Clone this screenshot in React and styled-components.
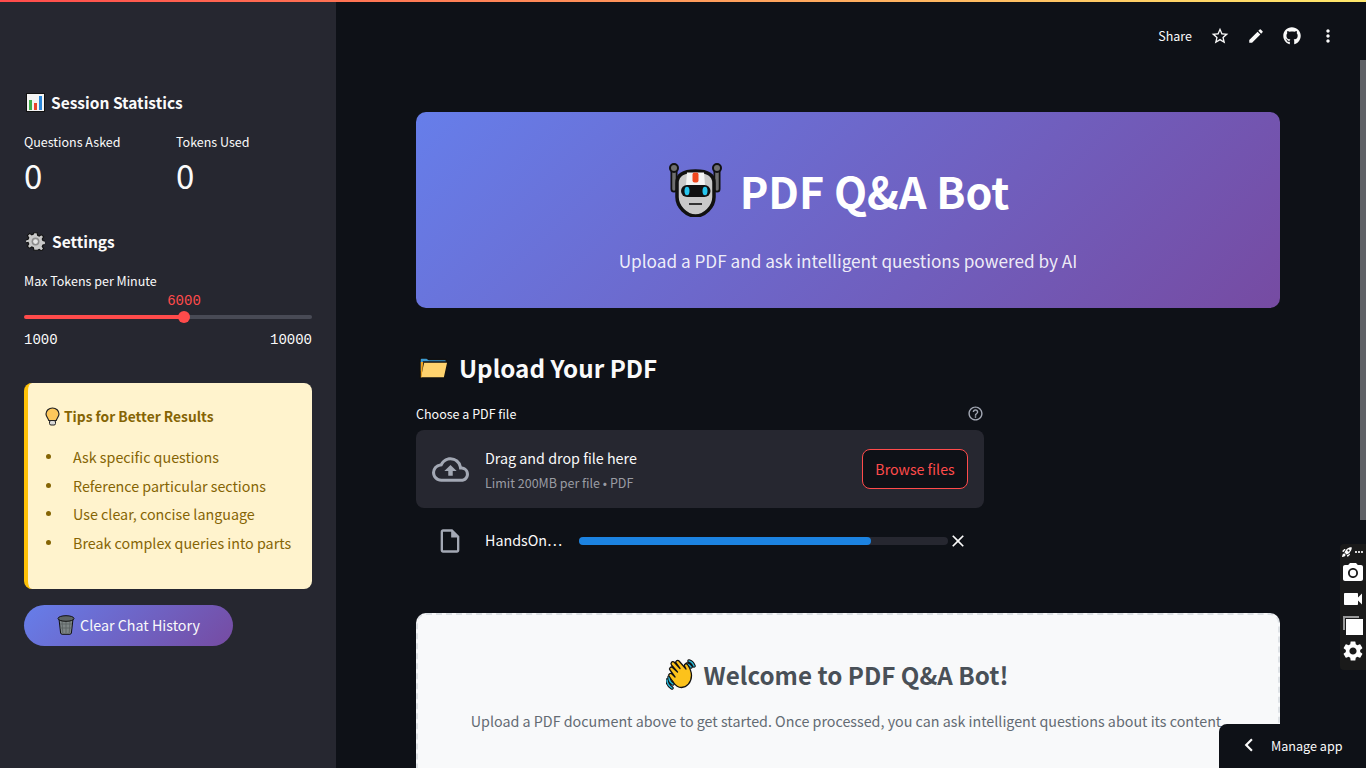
import styled, { createGlobalStyle } from 'styled-components';
import {
    MdStarBorder, MdEdit, MdMoreVert, MdOutlineCloudUpload, MdOutlineInsertDriveFile, MdClose,
    MdHelpOutline, MdChevronLeft, MdPhotoCamera, MdVideocam, MdSettings, MdMoreHoriz, MdRocketLaunch,
} from 'react-icons/md';
import { FaGithub } from 'react-icons/fa';

const GlobalStyle = createGlobalStyle`
    html, body {
        margin: 0;
        height: 100%;
        overflow: hidden;
        background: #0e1117;
    }
    * { box-sizing: border-box; }
    body {
        font-family: "Noto Sans CJK JP", "Noto Sans", sans-serif;
        color: #fafafa;
    }
`;

const Page = styled.div`
    position: relative;
    display: flex;
    flex-direction: column;
    width: 1366px;
    height: 768px;
    overflow: hidden;
`;

const Decoration = styled.div`
    flex: none;
    height: 2px;
    background: linear-gradient(90deg, #ff4b4b, #ffe96b);
`;

const Body = styled.div`
    display: flex;
    flex: 1;
    min-height: 0;
`;

const Sidebar = styled.aside`
    flex: none;
    width: 336px;
    padding: 87px 24px 0;
    background: #262730;
`;

const SideHeading = styled.h3`
    display: flex;
    align-items: center;
    gap: ${(p) => p.$gap || 6}px;
    margin: 0;
    padding-left: 2px;
    height: 26px;
    font-size: 15.5px;
    line-height: 26px;
    font-weight: 600;
`;

const Metrics = styled.div`
    display: grid;
    grid-template-columns: 152px 1fr;
    margin-top: 16px;
    margin-bottom: 31px;
`;

const MetricLabel = styled.div`
    font-size: 12.5px;
    line-height: 22px;
`;

const MetricValue = styled.div`
    font-size: 33px;
    line-height: 44px;
    font-weight: 400;
`;

const FieldLabel = styled.div`
    font-size: 12.5px;
    line-height: 20px;
    margin-top: ${(p) => p.$top || 0}px;
`;

const Slider = styled.div`
    margin-top: 1px;
    font-family: "Liberation Mono", monospace;
    font-size: 14px;
`;

const SliderValue = styled.div`
    text-align: center;
    width: 320px;
    line-height: 18px;
    color: #ff4b4b;
`;

const Track = styled.div`
    position: relative;
    height: 4px;
    margin-top: 5px;
    border-radius: 2px;
    background: linear-gradient(90deg, #ff4b4b 0 160px, #484a55 160px);
`;

const Thumb = styled.span`
    position: absolute;
    left: 154px;
    top: -4px;
    width: 12px;
    height: 12px;
    border-radius: 50%;
    background: #ff4b4b;
`;

const SliderEnds = styled.div`
    display: flex;
    justify-content: space-between;
    margin-top: 12px;
    line-height: 18px;
    color: #fafafa;
`;

const TipsBox = styled.div`
    margin-top: 34px;
    height: 206px;
    padding: 21px 20px 0 18px;
    border-left: 4px solid #ffc107;
    border-radius: 8px;
    background: #fff3cd;
    color: #856404;
`;

const TipsTitle = styled.div`
    display: flex;
    align-items: center;
    gap: 4px;
    height: 24px;
    margin-left: -1px;
    font-size: 13.8px;
    font-weight: 600;
    line-height: 24px;
`;

const TipsList = styled.ul`
    margin: 14px 0 0;
    padding: 0;
    list-style: none;
`;

const TipsItem = styled.li`
    display: flex;
    align-items: center;
    height: 28.8px;
    font-size: 14.3px;
    white-space: nowrap;

    &::before {
        content: '';
        flex: none;
        width: 5px;
        height: 5px;
        margin-right: 22px;
        border-radius: 50%;
        background: #856404;
    }
`;

const ClearButton = styled.button`
    display: flex;
    align-items: center;
    justify-content: center;
    gap: 5px;
    width: 209px;
    height: 41px;
    margin-top: 16px;
    padding: 0 0 2px;
    border: 0;
    border-radius: 21px;
    background: linear-gradient(135deg, #667eea, #764ba2);
    color: #fafafa;
    font-family: inherit;
    font-size: 14.3px;
`;

const Main = styled.main`
    position: relative;
    flex: 1;
    min-width: 0;
    overflow: hidden;
`;

const Header = styled.header`
    display: flex;
    align-items: center;
    justify-content: flex-end;
    height: 68px;
    padding-right: 20px;
`;

const ShareLabel = styled.span`
    margin-right: 10px;
    font-size: 12.5px;
    line-height: 20px;
`;

const HeaderIcon = styled.span`
    display: flex;
    align-items: center;
    justify-content: center;
    width: 36px;
    height: 36px;
    font-size: ${(p) => p.$size || 20}px;
`;

const Content = styled.div`
    padding: 42px 86px 0 80px;
`;

const Hero = styled.section`
    display: flex;
    flex-direction: column;
    align-items: center;
    height: 196px;
    padding-top: 48px;
    border-radius: 10px;
    background: linear-gradient(135deg, #667eea 0%, #764ba2 100%);
`;

const HeroTitle = styled.h1`
    display: flex;
    align-items: center;
    gap: 17px;
    margin: 0 18px 0 0;
    height: 60px;
    font-size: 43px;
    line-height: 60px;
    font-weight: 700;
    color: #fff;
`;

const HeroText = styled.p`
    margin: 27px 0 0;
    font-size: 17.2px;
    line-height: 28px;
    color: rgba(255, 255, 255, 0.9);
`;

const SectionTitle = styled.h2`
    display: flex;
    align-items: center;
    gap: 10px;
    margin: 41px 0 0;
    padding-left: 3px;
    height: 38px;
    font-size: 24.2px;
    line-height: 38px;
    font-weight: 600;
`;

const Uploader = styled.div`
    width: 568px;
    margin-top: 16px;
`;

const UploaderHead = styled.div`
    display: flex;
    align-items: center;
    justify-content: space-between;
    height: 20px;
    margin-bottom: 7px;
    font-size: 12.5px;
`;

const HelpIcon = styled(MdHelpOutline)`
    font-size: 17px;
    color: #a3a8b4;
`;

const DropZone = styled.div`
    display: flex;
    align-items: center;
    height: 78px;
    padding: 0 16px;
    border-radius: 8px;
    background: #262730;
`;

const CloudIcon = styled(MdOutlineCloudUpload)`
    flex: none;
    font-size: 37px;
    color: #a3a8b4;
`;

const DropText = styled.div`
    flex: 1;
    margin-left: 16px;
`;

const DropTitle = styled.div`
    font-size: 14.3px;
    line-height: 24px;
`;

const DropHint = styled.div`
    margin-top: 3px;
    font-size: 12.5px;
    line-height: 20px;
    color: #9a9ca3;
`;

const BrowseButton = styled.button`
    width: 106px;
    height: 40px;
    border: 1px solid #ff4b4b;
    border-radius: 8px;
    background: #0e1117;
    color: #ff4b4b;
    font-family: inherit;
    font-size: 14.2px;
`;

const FileRow = styled.div`
    display: flex;
    align-items: center;
    height: 32px;
    margin-top: 17px;
    padding-left: 20px;
`;

const FileIcon = styled(MdOutlineInsertDriveFile)`
    flex: none;
    font-size: 28px;
    color: #a3a8b4;
`;

const FileName = styled.span`
    width: 94px;
    margin-left: 21px;
    padding-bottom: 3px;
    font-size: 14.3px;
    white-space: nowrap;
`;

const Progress = styled.div`
    width: 369px;
    height: 8px;
    border-radius: 4px;
    background: #262730;
`;

const ProgressFill = styled.div`
    height: 100%;
    border-radius: 4px;
    background: #1c83e1;
`;

const CloseIcon = styled(MdClose)`
    flex: none;
    font-size: 20px;
`;

const WelcomeCard = styled.section`
    display: flex;
    flex-direction: column;
    align-items: center;
    height: 220px;
    margin-top: 56px;
    padding-top: 41px;
    border: 2px dashed #dee2e6;
    border-radius: 10px;
    background: #f8f9fa;
`;

const WelcomeTitle = styled.h2`
    display: flex;
    align-items: center;
    gap: 8px;
    margin: 0 22px 0 0;
    height: 38px;
    font-size: 24.2px;
    line-height: 38px;
    font-weight: 600;
    color: #495057;
`;

const WelcomeText = styled.p`
    margin: 15px 4px 0 0;
    font-size: 14.3px;
    line-height: 24px;
    white-space: nowrap;
    color: #636b73;
`;

const ScrollThumb = styled.div`
    position: absolute;
    top: 60px;
    right: 0;
    width: 6px;
    height: 460px;
    background: #5f6166;
`;

const RecorderBar = styled.div`
    position: absolute;
    top: 544px;
    right: 0;
    display: flex;
    flex-direction: column;
    align-items: center;
    width: 26px;
    height: 126px;
    padding-top: 3px;
    border-radius: 4px 0 0 4px;
    background: #1a1a1a;
    color: #fff;
    font-size: 24px;
`;

const RecorderTop = styled.div`
    display: flex;
    align-items: center;
    height: 10px;
    margin-bottom: 3px;
    font-size: 12px;
`;

const RecorderIcon = styled.span`
    display: flex;
    height: 26px;
    align-items: center;
`;

const ManageApp = styled.div`
    position: absolute;
    right: 0;
    bottom: 0;
    display: flex;
    align-items: center;
    width: 147px;
    height: 44px;
    padding: 0 0 2px 17px;
    border-top-left-radius: 8px;
    background: #0e1117;
    font-size: 12.6px;
`;

const ManageIcon = styled(MdChevronLeft)`
    flex: none;
    margin-right: 9px;
    font-size: 26px;
`;

/* emoji drawings */
const ChartEmoji = () => (
    <svg width="19" height="19" viewBox="0 0 19 19">
        <rect x="0.5" y="0.5" width="18" height="18" fill="#f4f4f4" stroke="#111" />
        <rect x="3" y="7" width="3" height="10" fill="#3fae49" />
        <rect x="8" y="10" width="3" height="7" fill="#e8452c" />
        <rect x="13" y="3" width="3" height="14" fill="#2a86d8" />
    </svg>
);

const GearEmoji = () => (
    <svg width="19" height="19" viewBox="0 0 24 24">
        <path d="M10 1h4l.7 3.2 2 .9 2.8-1.800 2.800 2.800-1.800 2.800.9 2 3.200.7v4l-3.200.7-.9 2 1.800 2.800-2.800 2.800-2.800-1.800-2 .9L14 23h-4l-.7-3.200-2-.9-2.800 1.800-2.800-2.800 1.800-2.800-.9-2L-.6 14v-4l3.200-.7.9-2L1.700 4.500l2.800-2.800 2.800 1.800 2-.9z" fill="#c9c9c9" stroke="#111" strokeWidth="1.400" />
        <circle cx="12" cy="12" r="5" fill="#8d8d8d" />
        <circle cx="12" cy="12" r="3" fill="#e6e6e6" />
    </svg>
);

const BulbEmoji = () => (
    <svg width="15" height="19" viewBox="0 0 15 19">
        <path d="M7.500 1C3.900 1 1 3.700 1 7c0 2.700 2.200 4 2.800 6.500h7.400C11.800 11 14 9.700 14 7c0-3.300-2.900-6-6.500-6z" fill="#fdc75b" stroke="#222" strokeWidth="1.200" />
        <rect x="4.500" y="13.500" width="6" height="4.500" rx="1.500" fill="#d8d8d8" stroke="#222" />
    </svg>
);

const TrashEmoji = () => (
    <svg width="18" height="20" viewBox="0 0 18 20">
        <path d="M2 4l1.600 14c.1.700.8 1.300 1.500 1.300h7.800c.7 0 1.400-.6 1.500-1.300L16 4z" fill="#7d8585" stroke="#111" />
        <path d="M5 6l.8 12M9 6v12M13 6l-.8 12M3 9h12M3.300 13h11.400" stroke="#5c6363" strokeWidth=".9" />
        <ellipse cx="9" cy="3.500" rx="8" ry="2.800" fill="#5c6363" stroke="#111" />
    </svg>
);

const RobotEmoji = () => (
    <svg width="54" height="54" viewBox="0 0 54 54">
        <path d="M5 5v21M48 5v21" stroke="#111" strokeWidth="7" strokeLinecap="round" />
        <path d="M5 5v21M48 5v21" stroke="#6f6f6f" strokeWidth="3.500" strokeLinecap="round" />
        <circle cx="5" cy="5" r="4" fill="#6f6f6f" stroke="#111" strokeWidth="2" />
        <circle cx="48" cy="5" r="4" fill="#6f6f6f" stroke="#111" strokeWidth="2" />
        <path d="M8 20C8 11 16 8 26.500 8S45 11 45 20v14c0 10-9.500 19-18.500 19S8 44 8 34z" fill="#c9c9c9" stroke="#111" strokeWidth="3.500" />
        <path d="M18 9.500h17L36 22H17z" fill="#f4f4f4" />
        <rect x="23.500" y="9.500" width="6" height="10" rx="2" fill="#f1481f" />
        <rect x="12" y="22" width="29.500" height="12" rx="6" fill="#111" />
        <ellipse cx="18" cy="28" rx="2.500" ry="4.200" fill="#25c6ee" />
        <ellipse cx="36" cy="28" rx="2.500" ry="4.200" fill="#25c6ee" />
        <rect x="20" y="40" width="13" height="2" fill="#333" />
    </svg>
);

const FolderEmoji = () => (
    <svg width="30" height="24" viewBox="0 0 30 24">
        <path d="M1 21V3.500C1 2.500 1.800 2 2.500 2h5c1 0 1.500 1.500 2.500 1.500h16c1 0 1.500.8 1.500 1.500V7H5z" fill="#3d9ad1" stroke="#111" strokeWidth="1.500" />
        <path d="M1 22L4.500 6h24.500L25.500 22z" fill="#ffd36e" stroke="#111" strokeWidth="1.500" />
        <path d="M1.800 21.500L1.800 6h2.500L2.500 21.500z" fill="#f0a320" />
    </svg>
);

const HandEmoji = () => (
    <svg width="30" height="32" viewBox="0 0 30 32">
        <path d="M1 21c0 3 2 6 5 8M3 18c0 3 2 6 4 7M23 2c2 .5 4 2.500 5 5M21 5c2 .5 3 1.500 4 3" fill="none" stroke="#111" strokeWidth="3.500" strokeLinecap="round" />
        <path d="M1 21c0 3 2 6 5 8M3 18c0 3 2 6 4 7M23 2c2 .5 4 2.500 5 5M21 5c2 .5 3 1.500 4 3" fill="none" stroke="#29b6d6" strokeWidth="1.500" strokeLinecap="round" />
        <path d="M4 11c-1.500-1.500 1-4 2.500-2.500l5 4.500-6-7C4 4 6.500 1.500 8 3l6 6.500L10 4c-1-1.800 1.500-3.500 3-2l7 8-1.500-3c-.5-2 2-3 3-1.500 2 3 4 7 4 11 0 7-5 12-10 12-4 0-6-2-8-5-1.500-2-3-4-4.500-6.500-1-2 1.500-3.500 3-2l3 3z" fill="#fcc21b" stroke="#111" strokeWidth="1.300" strokeLinejoin="round" />
    </svg>
);

const CopyIcon = () => (
    <svg width="22" height="22" viewBox="0 0 22 22">
        <path d="M2 16V3h15" fill="none" stroke="#9a9a9a" strokeWidth="2" />
        <rect x="4" y="5" width="17" height="16" fill="#fff" />
    </svg>
);

const tips = [
    'Ask specific questions',
    'Reference particular sections',
    'Use clear, concise language',
    'Break complex queries into parts',
];

const App = () => {
    return (
        <Page>
            <GlobalStyle />
            <Decoration />
            <Body>
                <Sidebar>
                    <SideHeading><ChartEmoji />Session Statistics</SideHeading>
                    <Metrics>
                        <div>
                            <MetricLabel>Questions Asked</MetricLabel>
                            <MetricValue>0</MetricValue>
                        </div>
                        <div>
                            <MetricLabel>Tokens Used</MetricLabel>
                            <MetricValue>0</MetricValue>
                        </div>
                    </Metrics>
                    <SideHeading $gap={7}><GearEmoji />Settings</SideHeading>
                    <FieldLabel $top={17}>Max Tokens per Minute</FieldLabel>
                    <Slider>
                        <SliderValue>6000</SliderValue>
                        <Track><Thumb /></Track>
                        <SliderEnds><span>1000</span><span>10000</span></SliderEnds>
                    </Slider>
                    <TipsBox>
                        <TipsTitle><BulbEmoji />Tips for Better Results</TipsTitle>
                        <TipsList>
                            {tips.map((tip) => <TipsItem key={tip}>{tip}</TipsItem>)}
                        </TipsList>
                    </TipsBox>
                    <ClearButton><TrashEmoji />Clear Chat History</ClearButton>
                </Sidebar>
                <Main>
                    <Header>
                        <ShareLabel>Share</ShareLabel>
                        <HeaderIcon><MdStarBorder /></HeaderIcon>
                        <HeaderIcon $size={18}><MdEdit /></HeaderIcon>
                        <HeaderIcon $size={18}><FaGithub /></HeaderIcon>
                        <HeaderIcon><MdMoreVert /></HeaderIcon>
                    </Header>
                    <Content>
                        <Hero>
                            <HeroTitle><RobotEmoji />PDF Q&amp;A Bot</HeroTitle>
                            <HeroText>Upload a PDF and ask intelligent questions powered by AI</HeroText>
                        </Hero>
                        <SectionTitle><FolderEmoji />Upload Your PDF</SectionTitle>
                        <Uploader>
                            <UploaderHead>
                                <span>Choose a PDF file</span>
                                <HelpIcon />
                            </UploaderHead>
                            <DropZone>
                                <CloudIcon />
                                <DropText>
                                    <DropTitle>Drag and drop file here</DropTitle>
                                    <DropHint>Limit 200MB per file • PDF</DropHint>
                                </DropText>
                                <BrowseButton>Browse files</BrowseButton>
                            </DropZone>
                            <FileRow>
                                <FileIcon />
                                <FileName>HandsOn…</FileName>
                                <Progress>
                                    <ProgressFill style={{ width: '79%' }} />
                                </Progress>
                                <CloseIcon />
                            </FileRow>
                        </Uploader>
                        <WelcomeCard>
                            <WelcomeTitle><HandEmoji />Welcome to PDF Q&amp;A Bot!</WelcomeTitle>
                            <WelcomeText>Upload a PDF document above to get started. Once processed, you can ask intelligent questions about its content</WelcomeText>
                        </WelcomeCard>
                    </Content>
                </Main>
            </Body>
            <ScrollThumb />
            <RecorderBar>
                <RecorderTop><MdRocketLaunch /><MdMoreHoriz /></RecorderTop>
                <RecorderIcon><MdPhotoCamera /></RecorderIcon>
                <RecorderIcon><MdVideocam /></RecorderIcon>
                <RecorderIcon><CopyIcon /></RecorderIcon>
                <RecorderIcon><MdSettings /></RecorderIcon>
            </RecorderBar>
            <ManageApp><ManageIcon />Manage app</ManageApp>
        </Page>
    );
};

export default App;
